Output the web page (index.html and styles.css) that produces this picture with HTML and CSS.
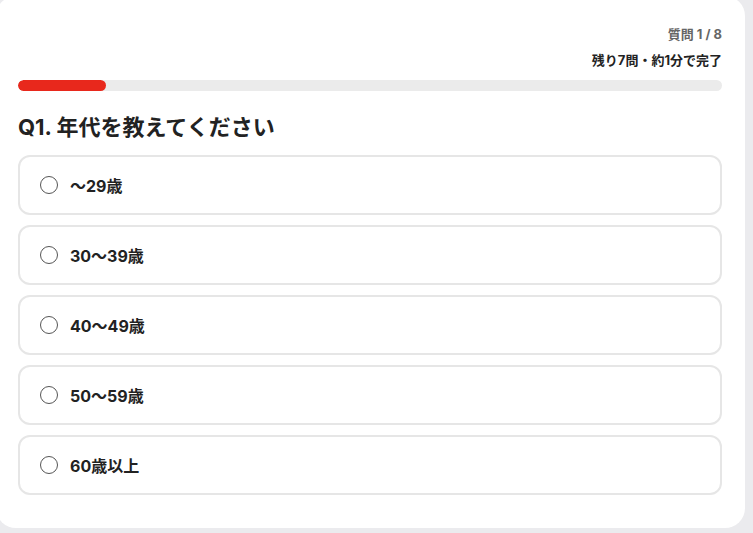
FILE: index.html
```html
<!DOCTYPE html>
<html lang="ja">
    <head>
        <meta charset="UTF-8">
        <meta name="viewport" content="width=device-width, initial-scale=1.0">
        <title>年代アンケート</title>
        <link rel="stylesheet" href="styles.css">
    </head>

    <body>
        <div class="card">
            <div class="meta">
                <p class="step">質問 1 / 8</p>
                <p class="remain">残り7問・約1分で完了</p>
            </div>
            <div class="progress"><div class="progress-fill" style="width: 12.5%;"></div></div>

            <h2 class="question">Q1. 年代を教えてください</h2>

            <div class="options">
                <label class="option"><input type="radio" name="age" value="1"><span>〜29歳</span></label>
                <label class="option"><input type="radio" name="age" value="2"><span>30〜39歳</span></label>
                <label class="option"><input type="radio" name="age" value="3"><span>40〜49歳</span></label>
                <label class="option"><input type="radio" name="age" value="4"><span>50〜59歳</span></label>
                <label class="option"><input type="radio" name="age" value="5"><span>60歳以上</span></label>
            </div>
        </div>
    </body>
</html>
```

FILE: styles.css
```css
* {
    margin: 0;
    box-sizing: border-box;
}
body {
    background-color: #ebebee;
    font-family: Inter, "Noto Sans CJK JP", sans-serif;
    color: #222;
    overflow: hidden;
}
.card {
    background-color: white;
    border-radius: 20px;
    width: 749px;
    height: 532px;
    margin: -4px 0 0 -4px;
    padding: 26px 23px 0 22px;
}
.meta {
    text-align: right;
    font-weight: 700;
    font-size: 13px;
}
.step {
    color: #666;
    line-height: 24px;
}
.remain {
    color: #222;
    line-height: 18px;
    margin-top: 5px;
}
.progress {
    height: 11px;
    background-color: #ebebeb;
    border-radius: 6px;
    margin-top: 11px;
    overflow: hidden;
}
.progress-fill {
    height: 100%;
    background-color: #e8281c;
    border-radius: 6px;
}
.question {
    font-size: 22px;
    font-weight: 700;
    line-height: 28px;
    margin-top: 22px;
}
.options {
    display: flex;
    flex-direction: column;
    gap: 10px;
    margin-top: 14px;
}
.option {
    display: flex;
    align-items: center;
    gap: 12px;
    height: 60px;
    padding-left: 20px;
    border: 2px solid #e6e6e6;
    border-radius: 12px;
    font-size: 16px;
    font-weight: 700;
    cursor: pointer;
}
.option input {
    appearance: none;
    width: 18px;
    height: 18px;
    margin: 0;
    border: 1px solid #555;
    border-radius: 50%;
    background-color: white;
}
.option input:checked {
    border: 5px solid #e8281c;
}
```
